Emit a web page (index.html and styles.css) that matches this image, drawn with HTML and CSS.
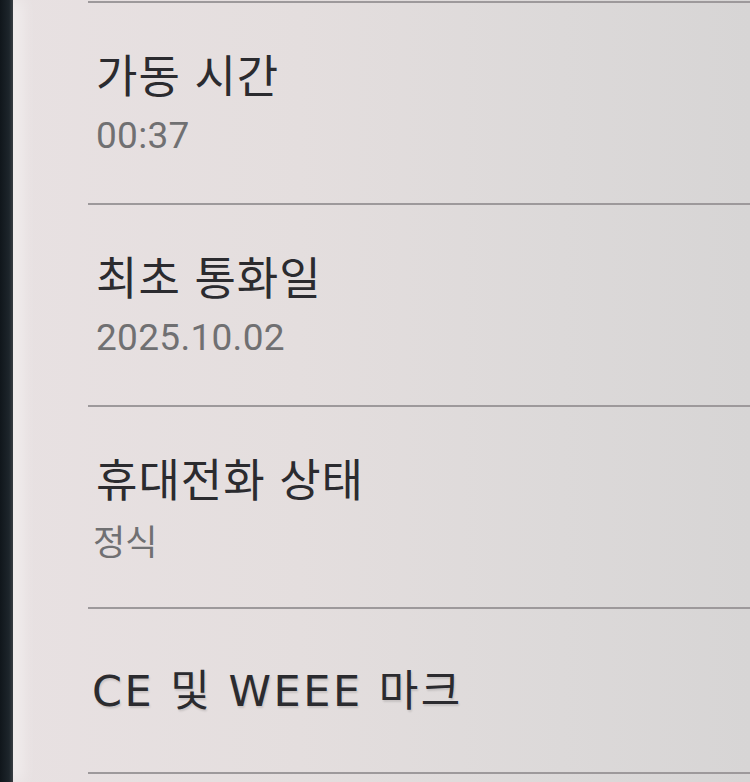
FILE: index.html
```html
<!DOCTYPE html>
<html lang="ko">
<head>
<meta charset="utf-8">
<title>휴대전화 정보</title>
<link rel="stylesheet" href="styles.css">
</head>
<body>
<div class="screen">
  <div class="bezel"></div>
  <div class="list">
    <div class="row">
      <div class="title">가동 시간</div>
      <div class="value">00:37</div>
    </div>
    <div class="row">
      <div class="title">최초 통화일</div>
      <div class="value">2025.10.02</div>
    </div>
    <div class="row">
      <div class="title">휴대전화 상태</div>
      <div class="value ko">정식</div>
    </div>
    <div class="row single">
      <div class="title latin">CE 및 WEEE 마크</div>
    </div>
    <div class="row empty"></div>
  </div>
</div>
</body>
</html>
```
FILE: styles.css
```css
html, body {
  margin: 0;
  padding: 0;
}
body {
  width: 750px;
  height: 782px;
  overflow: hidden;
  background: #dedada;
}
.screen {
  display: flex;
  height: 782px;
  overflow: hidden;
  background: linear-gradient(90deg, #e8e1e2 0%, #e4dede 40%, #dcd9d9 75%, #d7d5d5 100%);
}
.bezel {
  width: 13px;
  flex: none;
  background: linear-gradient(90deg, #10161b 0%, #1d252b 70%, #3a3f44 100%);
  box-shadow: 8px 0 16px rgba(255,255,255,0.55);
}
.list {
  flex: 1;
  display: flex;
  flex-direction: column;
  padding-left: 75px;
  padding-top: 1px;
}
.row {
  flex: none;
  border-top: 2px solid #9d999b;
  height: 200px;
  display: flex;
  flex-direction: column;
  justify-content: center;
  padding-left: 8px;
  gap: 10px;
}
.row.single {
  height: 163px;
}
.row.empty {
  height: 20px;
}
.title {
  font-family: "Noto Sans CJK KR", sans-serif;
  font-size: 45px;
  line-height: 56px;
  color: #2b2b2f;
  letter-spacing: 1px;
}
.title.latin {
  font-family: "DejaVu Sans", "Noto Sans CJK KR", sans-serif;
  font-size: 43px;
  letter-spacing: 2.5px;
  margin-left: -4px;
  text-shadow: 1px 2px 2px rgba(0,0,0,0.12);
}
.value {
  font-family: Roboto, "Noto Sans CJK KR", sans-serif;
  font-size: 37px;
  line-height: 48px;
  color: #707072;
  letter-spacing: 0.3px;
}
.value.ko {
  font-family: "Noto Sans CJK KR", sans-serif;
  font-size: 35px;
  margin-left: -3px;
  letter-spacing: 0;
}
```
